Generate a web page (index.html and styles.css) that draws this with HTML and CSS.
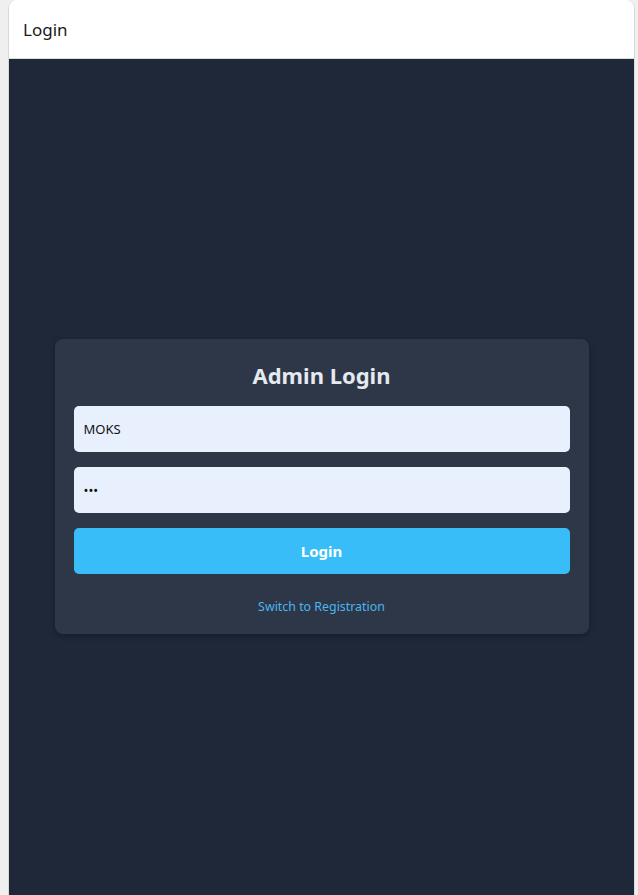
FILE: index.html
```html
<!DOCTYPE html>
<html>
<head>
<meta charset="utf-8">
<link rel="stylesheet" href="styles.css">
</head>
<body>
<div class="window">
  <header class="titlebar">Login</header>
  <main class="stage">
    <div class="card">
      <h2 class="title">Admin Login</h2>
      <input class="field" type="text" value="MOKS">
      <input class="field" type="password" value="abc">
      <button class="btn">Login</button>
      <a class="switch" href="#">Switch to Registration</a>
    </div>
  </main>
</div>
</body>
</html>
```
FILE: styles.css
```css
html, body {
  margin: 0;
  height: 100%;
}
body {
  background: #efefef;
  font-family: "Noto Sans", "Open Sans", sans-serif;
  display: flex;
}
.window {
  margin-left: 8px;
  width: 627px;
  height: 895px;
  display: flex;
  flex-direction: column;
  border-radius: 9px 9px 0 0;
  overflow: hidden;
  border-left: 1px solid #d9d9d9;
  border-right: 1px solid #d9d9d9;
  box-sizing: border-box;
  background: #fff;
}
.titlebar {
  height: 59px;
  flex-shrink: 0;
  box-sizing: border-box;
  border-bottom: 1px solid #dcdcdc;
  padding-left: 14px;
  display: flex;
  align-items: center;
  font-size: 17px;
  color: #1a1a1a;
  background: #fff;
}
.stage {
  flex: 1;
  background: #1f2839;
  display: flex;
  align-items: center;
  justify-content: center;
  padding-top: 18px;
}
.card {
  width: 534px;
  box-sizing: border-box;
  background: #2e3748;
  border-radius: 8px;
  box-shadow: 0 2px 6px rgba(0,0,0,0.3);
  padding: 20px 19px 18px;
  display: flex;
  flex-direction: column;
}
.title {
  margin: 0 0 15px;
  text-align: center;
  font-size: 22px;
  line-height: 32px;
  font-weight: 700;
  color: #e5e9f0;
}
.field {
  height: 46px;
  border: none;
  border-radius: 5px;
  background: #e8f0fe;
  padding: 0 10px;
  font-family: inherit;
  font-size: 13px;
  color: #111;
  margin: 0 0 15px;
  outline: none;
}
.btn {
  height: 46px;
  border: none;
  border-radius: 5px;
  background: #38bdf8;
  color: #fff;
  font-family: inherit;
  font-weight: 700;
  font-size: 15px;
}
.switch {
  margin-top: 24px;
  text-align: center;
  font-size: 12.4px;
  line-height: 18px;
  color: #4ab6ee;
  text-decoration: none;
}
```
